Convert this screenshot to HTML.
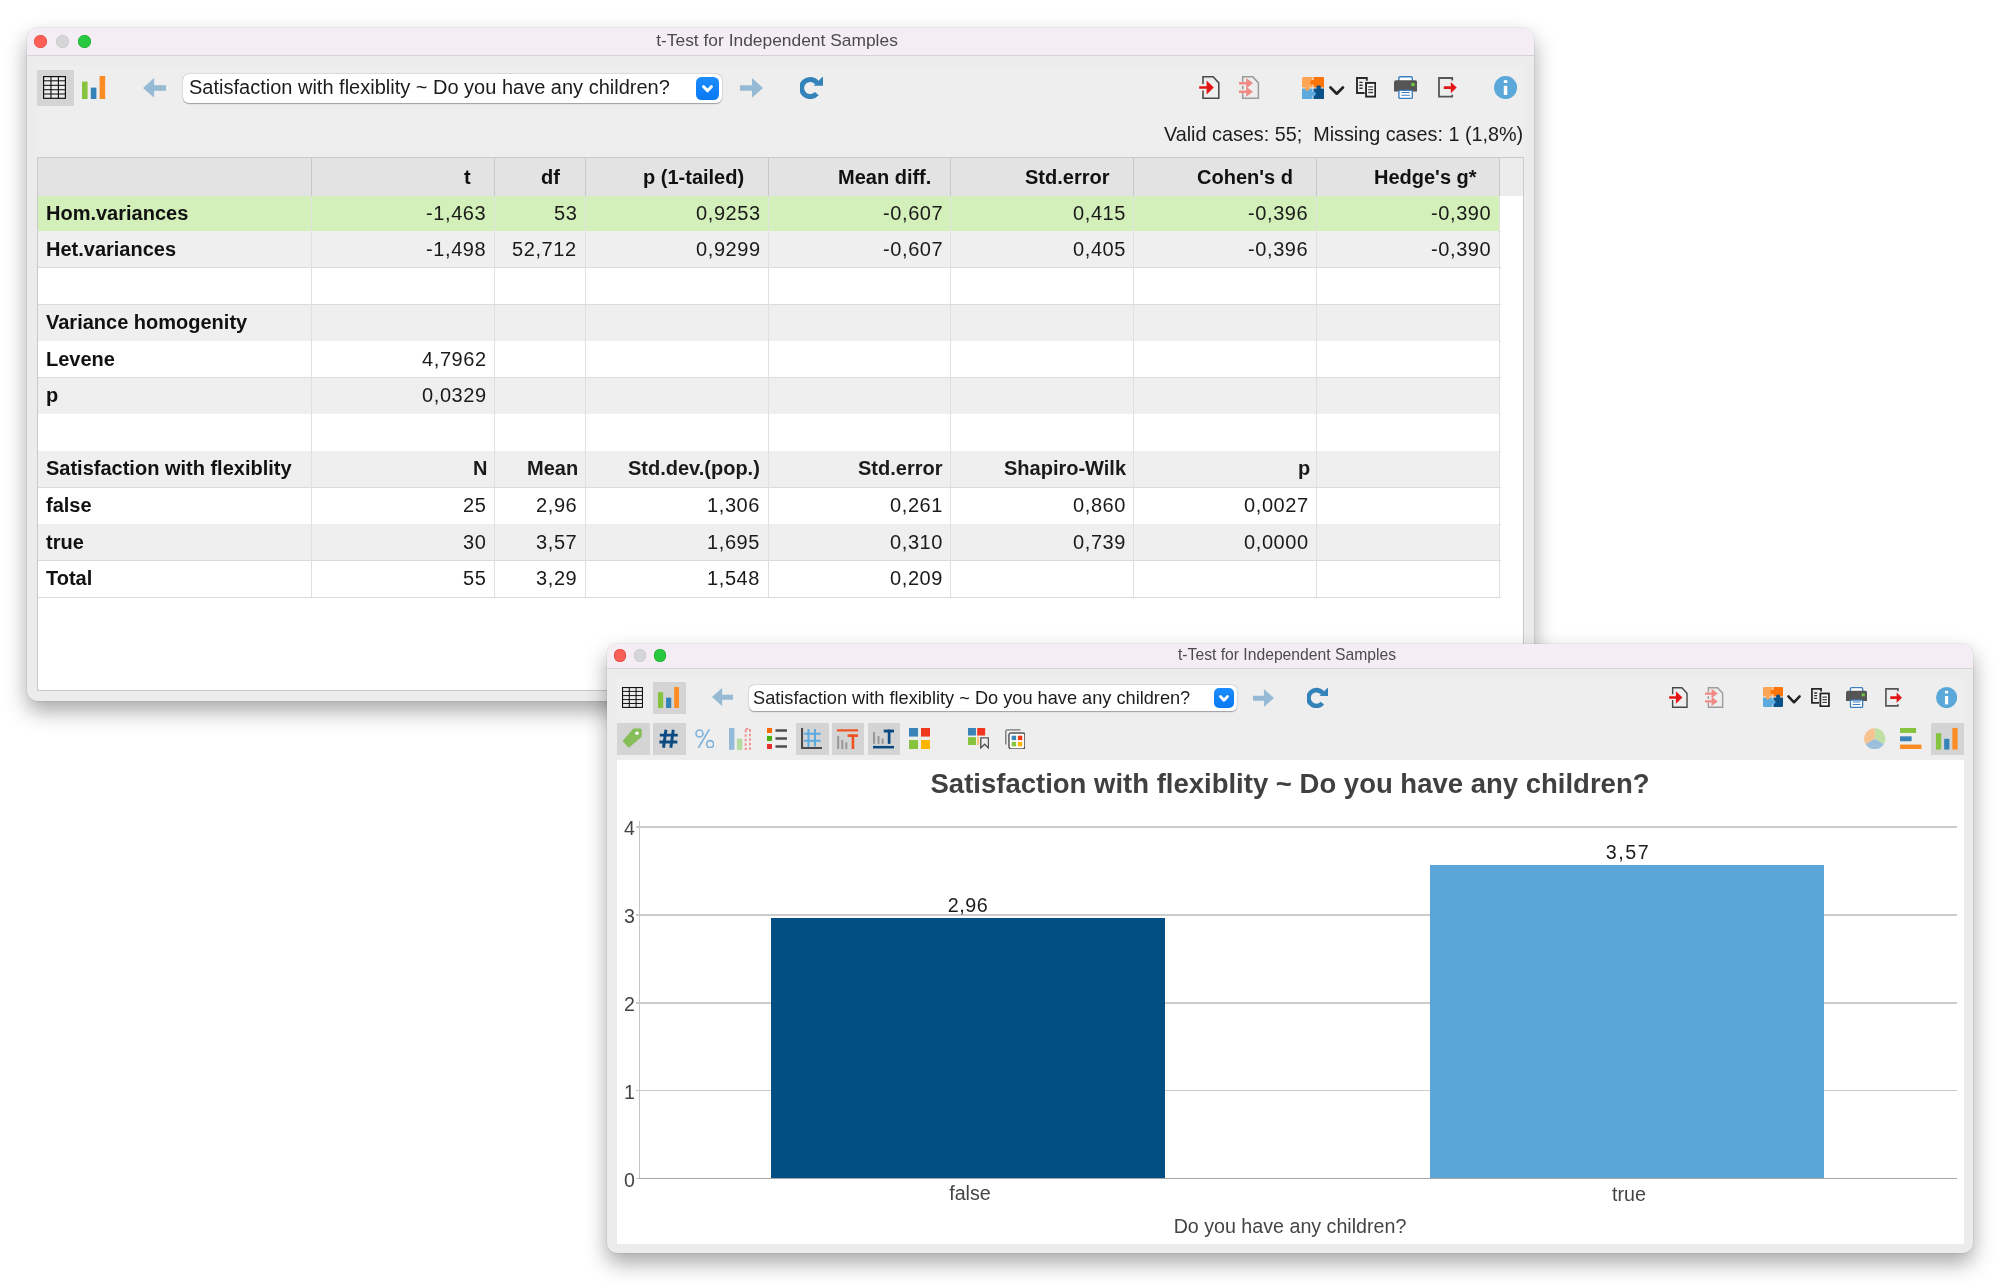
<!DOCTYPE html><html><head><meta charset="utf-8"><style>
html,body{margin:0;padding:0;background:#fff;width:2000px;height:1286px;overflow:hidden;position:relative}
.a{position:absolute;display:block}
.t{position:absolute;white-space:pre;font-family:"Liberation Sans",sans-serif;will-change:transform}
.win{position:absolute;overflow:hidden;background:#ececec}
</style></head><body>
<div class="a" style="left:27px;top:28px;width:1507px;height:673px;border-radius:11px;box-shadow:0 0 0 1px rgba(0,0,0,0.045),0 10px 21px rgba(0,0,0,0.35);background:#ececec"></div>
<div class="a" style="left:27.00px;top:28.00px;width:1507.00px;height:27.00px;background:#f4eef4;border-radius:11px 11px 0 0"></div>
<div class="a" style="left:27.00px;top:55.00px;width:1507.00px;height:1.00px;background:#d3d3d3;"></div>
<div class="a" style="left:34.10px;top:34.90px;width:13.00px;height:13.00px;border-radius:50%;background:#fe5f57;box-shadow:inset 0 0 0 0.6px #e0443e"></div><div class="a" style="left:55.80px;top:34.90px;width:13.00px;height:13.00px;border-radius:50%;background:#d6d6d6;box-shadow:inset 0 0 0 0.6px #c6c6c6"></div><div class="a" style="left:77.50px;top:34.90px;width:13.00px;height:13.00px;border-radius:50%;background:#28c840;box-shadow:inset 0 0 0 0.6px #1daa2c"></div>
<div class="t" style="left:-223.00px;width:2000px;text-align:center;top:31.87px;font-size:17.4px;line-height:17.4px;font-weight:400;color:#4b4b4b;">t-Test for Independent Samples</div>
<div class="a" style="left:37.00px;top:66.00px;width:1487.50px;height:625.00px;background:#eeeeee;"></div>
<div class="a" style="left:37.00px;top:70.00px;width:37.00px;height:36.00px;background:#d4d4d4;"></div>
<svg class="a" style="left:42.90px;top:76.20px" width="23.00" height="23.00" viewBox="0 0 23 23"><rect x="0.6" y="0.6" width="21.8" height="21.7" fill="#ededed" stroke="#111" stroke-width="1.2"/><line x1="0.6" y1="4.8" x2="22.4" y2="4.8" stroke="#1a1a1a" stroke-width="1.1"/><line x1="0.6" y1="9.36" x2="22.4" y2="9.36" stroke="#1a1a1a" stroke-width="1.1"/><line x1="0.6" y1="13.7" x2="22.4" y2="13.7" stroke="#1a1a1a" stroke-width="1.1"/><line x1="0.6" y1="18.0" x2="22.4" y2="18.0" stroke="#1a1a1a" stroke-width="1.1"/><line x1="7.96" y1="0.6" x2="7.96" y2="22.3" stroke="#111" stroke-width="1.15"/><line x1="15.4" y1="0.6" x2="15.4" y2="22.3" stroke="#111" stroke-width="1.15"/></svg>
<svg class="a" style="left:82.40px;top:76.00px" width="23.20" height="23.20" viewBox="0 0 23.2 23.2"><rect x="0" y="5.6" width="5.6" height="17.6" fill="#86c440"/><rect x="8.8" y="11.6" width="5.6" height="11.6" fill="#3383b8"/><rect x="17.6" y="0" width="5.6" height="23.2" fill="#fd8c24"/></svg>
<svg class="a" style="left:142.66px;top:77.50px" width="23.10" height="19.70" viewBox="0 0 23.1 19.7"><path d="M0 10 L11.1 0 V7.3 H23.1 V12.8 H11.1 V19.7 Z" fill="#96bad4"/></svg>
<div class="a" style="left:183.30px;top:73.80px;width:538.50px;height:29.40px;background:#fff;border-radius:6px;box-shadow:0 0.8px 1.2px rgba(0,0,0,0.32),0 0 0 0.5px rgba(0,0,0,0.07)"></div>
<div class="t" style="left:188.50px;top:77.07px;font-size:20px;line-height:20px;font-weight:400;color:#1c1c1c;">Satisfaction with flexiblity ~ Do you have any children?</div>
<div class="a" style="left:696.00px;top:76.80px;width:23.00px;height:23.00px;background:linear-gradient(#1b8dff,#0a78f2);border-radius:5.5px"></div>
<svg class="a" style="left:702.00px;top:85.00px" width="11.00" height="7.60" viewBox="0 0 11.00 7.60"><path d="M1.65 1.65 L5.50 5.80 L9.35 1.65" fill="none" stroke="#fff" stroke-width="3.0" stroke-linecap="round" stroke-linejoin="round"/></svg>
<svg class="a" style="left:739.70px;top:78.00px" width="23.10" height="19.70" viewBox="0 0 23.1 19.7"><path d="M23.1 10 L12 0 V7.3 H0 V12.8 H12 V19.7 Z" fill="#96bad4"/></svg>
<svg class="a" style="left:799.90px;top:76.00px" width="23.20" height="23.20" viewBox="0 0 23.2 23.2"><path d="M16.98 6.71 A8.6 8.6 0 1 0 16.79 17.53" fill="none" stroke="#3382b9" stroke-width="5.0"/><path d="M23.2 0 V9.8 H13.6 Z" fill="#3382b9"/></svg>
<svg class="a" style="left:1199.00px;top:76.00px" width="21.00" height="23.20" viewBox="0 0 21 23.2"><path d="M4 8 V0.75 H14.1 L19.8 6.9 V22.3 H4 V14.4" fill="none" stroke="#484848" stroke-width="1.55"/><path d="M0.2 10.2 H7.6 V4.6 L14.8 11.5 L7.6 18.4 V12.8 H0.2 Z" fill="#e31616"/></svg>
<svg class="a" style="left:1239.00px;top:76.00px" width="21.00" height="23.20" viewBox="0 0 21 23.2"><path d="M3.7 5.8 V0.75 H13.8 L19.4 6.9 V22.3 H3.7 V17 M3.7 13.3 V9.8" fill="none" stroke="#9c9c9c" stroke-width="1.55"/><path d="M0 6 H7.2 V2 L14 7.2 L7.2 12.4 V8.4 H0 Z M0 14.6 H7.2 V10.8 L14 15.8 L7.2 20.8 V17 H0 Z" fill="#f08a84"/></svg>
<svg class="a" style="left:1302.40px;top:76.50px" width="22.10" height="22.30" viewBox="0 0 22.1 22.3"><g><path d="M1.2 0 H10.55 V3.5 A2.4 2.4 0 0 0 10.55 7.3 V10.55 H7.3 A2.4 2.4 0 0 0 3.5 10.55 H0 V1.2 Q0 0 1.2 0 Z" fill="#fda455"/><path d="M11.55 0 H20.9 Q22.1 0 22.1 1.2 V10.55 H18.6 A2.4 2.4 0 0 0 14.8 10.55 H11.55 V7.3 A2.4 2.4 0 0 1 11.55 3.5 Z" fill="#ff7408"/><path d="M0 11.55 H3.5 A2.4 2.4 0 0 0 7.3 11.55 H10.55 V14.8 A2.4 2.4 0 0 1 10.55 18.6 V22.1 H1.2 Q0 22.1 0 20.9 Z" fill="#5aaade"/><path d="M11.55 11.55 H14.8 A2.4 2.4 0 0 1 18.6 11.55 H22.1 V20.9 Q22.1 22.1 20.9 22.1 H11.55 V18.6 A2.4 2.4 0 0 0 11.55 14.8 Z" fill="#0a5189"/></g><circle cx="10.55" cy="5.4" r="2.3" fill="#ff7408"/><circle cx="5.4" cy="11.55" r="2.3" fill="#fda455"/><circle cx="11.55" cy="16.7" r="2.3" fill="#5aaade"/><circle cx="16.7" cy="10.55" r="2.3" fill="#0a5189"/></svg>
<svg class="a" style="left:1329.20px;top:85.50px" width="15.40" height="9.40" viewBox="0 0 15.40 9.40"><path d="M1.49 1.49 L7.70 7.78 L13.91 1.49" fill="none" stroke="#222" stroke-width="2.7" stroke-linecap="round" stroke-linejoin="round"/></svg>
<svg class="a" style="left:1356.00px;top:77.00px" width="20.20" height="20.60" viewBox="0 0 20.2 20.6"><path d="M10.8 3.8 V1 H1 V16 H8.6" fill="none" stroke="#2a2a2a" stroke-width="1.9"/><path d="M3.4 5.4 H6.6 M3.4 8.3 H6.6 M3.4 11.2 H6.6" stroke="#333" stroke-width="1.4"/><rect x="10.1" y="5.9" width="9.2" height="13.7" fill="#fff" stroke="#222" stroke-width="1.9"/><path d="M12.2 9.9 H17.2 M12.2 12.6 H17.2 M12.2 15.5 H17.2" stroke="#444" stroke-width="1.4"/></svg>
<svg class="a" style="left:1394.00px;top:76.00px" width="23.20" height="23.20" viewBox="0 0 23.2 23.2"><rect x="4.9" y="0.7" width="13.4" height="9" rx="1.2" fill="#fff" stroke="#3d7fc0" stroke-width="1.4"/><path d="M2 4.2 H21.2 Q23.2 4.2 23.2 6.2 V15.4 H0 V6.2 Q0 4.2 2 4.2 Z" fill="#555"/><rect x="17.2" y="7" width="3.5" height="3.2" fill="#6fc53a"/><rect x="4.9" y="14.4" width="13.4" height="8.1" rx="1.2" fill="#fff" stroke="#3d7fc0" stroke-width="1.4"/><path d="M7.4 16.5 H15.8 M7.4 19.3 H15.8" stroke="#3d7fc0" stroke-width="1.1"/></svg>
<svg class="a" style="left:1438.00px;top:77.00px" width="19.00" height="21.00" viewBox="0 0 19 21"><path d="M14.2 3.5 V1 H1 V19.7 H14.2 V17.8" fill="none" stroke="#555" stroke-width="1.8"/><path d="M5.8 9.2 H12.8 V5 L18.7 10.6 L12.8 16.2 V12 H5.8 Z" fill="#e31616"/></svg>
<svg class="a" style="left:1493.80px;top:76.00px" width="23.10" height="23.10" viewBox="0 0 23.1 23.1"><circle cx="11.55" cy="11.55" r="11.55" fill="#5aa7da"/><rect x="9.8" y="4.2" width="3.5" height="2.8" fill="#fff"/><rect x="9.8" y="9.8" width="3.5" height="9.2" fill="#fff"/></svg>
<div class="t" style="right:477.30px;text-align:right;top:125.24px;font-size:19.8px;line-height:19.8px;font-weight:400;color:#1c1c1c;">Valid cases: 55;  Missing cases: 1 (1,8%)</div>
<div class="a" style="left:37.00px;top:157.00px;width:1487.20px;height:534.00px;background:#fff;box-shadow:inset 0 0 0 1px #c9c9c9"></div>
<div class="a" style="left:38.00px;top:158.00px;width:1462.00px;height:38.00px;background:#e3e3e3;"></div>
<div class="a" style="left:1500.00px;top:158.00px;width:23.20px;height:38.00px;background:#ececec;"></div>
<div class="a" style="left:38.00px;top:196.00px;width:1462.00px;height:35.30px;background:#d3efba;"></div>
<div class="a" style="left:38.00px;top:230.80px;width:1462.50px;height:1.20px;background:#dadada;"></div>
<div class="a" style="left:38.00px;top:231.30px;width:1462.00px;height:36.60px;background:#efefef;"></div>
<div class="a" style="left:38.00px;top:267.40px;width:1462.50px;height:1.20px;background:#dadada;"></div>
<div class="a" style="left:38.00px;top:267.90px;width:1462.00px;height:36.60px;background:#fff;"></div>
<div class="a" style="left:38.00px;top:304.00px;width:1462.50px;height:1.20px;background:#dadada;"></div>
<div class="a" style="left:38.00px;top:304.50px;width:1462.00px;height:36.60px;background:#efefef;"></div>
<div class="a" style="left:38.00px;top:340.60px;width:1462.50px;height:1.20px;background:#dadada;"></div>
<div class="a" style="left:38.00px;top:341.10px;width:1462.00px;height:36.60px;background:#fff;"></div>
<div class="a" style="left:38.00px;top:377.20px;width:1462.50px;height:1.20px;background:#dadada;"></div>
<div class="a" style="left:38.00px;top:377.70px;width:1462.00px;height:36.70px;background:#efefef;"></div>
<div class="a" style="left:38.00px;top:413.90px;width:1462.50px;height:1.20px;background:#dadada;"></div>
<div class="a" style="left:38.00px;top:414.40px;width:1462.00px;height:36.60px;background:#fff;"></div>
<div class="a" style="left:38.00px;top:450.50px;width:1462.50px;height:1.20px;background:#dadada;"></div>
<div class="a" style="left:38.00px;top:451.00px;width:1462.00px;height:36.60px;background:#efefef;"></div>
<div class="a" style="left:38.00px;top:487.10px;width:1462.50px;height:1.20px;background:#dadada;"></div>
<div class="a" style="left:38.00px;top:487.60px;width:1462.00px;height:36.60px;background:#fff;"></div>
<div class="a" style="left:38.00px;top:523.70px;width:1462.50px;height:1.20px;background:#dadada;"></div>
<div class="a" style="left:38.00px;top:524.20px;width:1462.00px;height:36.60px;background:#efefef;"></div>
<div class="a" style="left:38.00px;top:560.30px;width:1462.50px;height:1.20px;background:#dadada;"></div>
<div class="a" style="left:38.00px;top:560.80px;width:1462.00px;height:36.60px;background:#fff;"></div>
<div class="a" style="left:38.00px;top:596.90px;width:1462.50px;height:1.20px;background:#dadada;"></div>
<div class="a" style="left:310.60px;top:158.00px;width:1.20px;height:38.00px;background:#c8c8c8;"></div>
<div class="a" style="left:310.60px;top:196.00px;width:1.20px;height:401.40px;background:#e0e0e0;"></div>
<div class="a" style="left:493.80px;top:158.00px;width:1.20px;height:38.00px;background:#c8c8c8;"></div>
<div class="a" style="left:493.80px;top:196.00px;width:1.20px;height:401.40px;background:#e0e0e0;"></div>
<div class="a" style="left:584.50px;top:158.00px;width:1.20px;height:38.00px;background:#c8c8c8;"></div>
<div class="a" style="left:584.50px;top:196.00px;width:1.20px;height:401.40px;background:#e0e0e0;"></div>
<div class="a" style="left:767.70px;top:158.00px;width:1.20px;height:38.00px;background:#c8c8c8;"></div>
<div class="a" style="left:767.70px;top:196.00px;width:1.20px;height:401.40px;background:#e0e0e0;"></div>
<div class="a" style="left:950.20px;top:158.00px;width:1.20px;height:38.00px;background:#c8c8c8;"></div>
<div class="a" style="left:950.20px;top:196.00px;width:1.20px;height:401.40px;background:#e0e0e0;"></div>
<div class="a" style="left:1132.90px;top:158.00px;width:1.20px;height:38.00px;background:#c8c8c8;"></div>
<div class="a" style="left:1132.90px;top:196.00px;width:1.20px;height:401.40px;background:#e0e0e0;"></div>
<div class="a" style="left:1315.80px;top:158.00px;width:1.20px;height:38.00px;background:#c8c8c8;"></div>
<div class="a" style="left:1315.80px;top:196.00px;width:1.20px;height:401.40px;background:#e0e0e0;"></div>
<div class="a" style="left:1498.80px;top:158.00px;width:1.20px;height:38.00px;background:#c8c8c8;"></div>
<div class="a" style="left:1498.80px;top:196.00px;width:1.20px;height:401.40px;background:#e0e0e0;"></div>
<div class="t" style="right:1529.60px;text-align:right;top:167.07px;font-size:20px;line-height:20px;font-weight:700;color:#111;">t</div>
<div class="t" style="right:1439.90px;text-align:right;top:167.07px;font-size:20px;line-height:20px;font-weight:700;color:#111;">df</div>
<div class="t" style="right:1256.20px;text-align:right;top:167.07px;font-size:20px;line-height:20px;font-weight:700;color:#111;">p (1-tailed)</div>
<div class="t" style="right:1068.90px;text-align:right;top:167.07px;font-size:20px;line-height:20px;font-weight:700;color:#111;">Mean diff.</div>
<div class="t" style="right:890.25px;text-align:right;top:167.07px;font-size:20px;line-height:20px;font-weight:700;color:#111;">Std.error</div>
<div class="t" style="right:707.10px;text-align:right;top:167.07px;font-size:20px;line-height:20px;font-weight:700;color:#111;">Cohen's d</div>
<div class="t" style="right:523.85px;text-align:right;top:167.07px;font-size:20px;line-height:20px;font-weight:700;color:#111;">Hedge's g*</div>
<div class="t" style="left:46.00px;top:203.47px;font-size:20px;line-height:20px;font-weight:700;color:#111;">Hom.variances</div>
<div class="t" style="right:1513.50px;text-align:right;top:203.47px;font-size:20px;line-height:20px;font-weight:400;color:#1a1a1a;letter-spacing:0.6px">-1,463</div>
<div class="t" style="right:1422.80px;text-align:right;top:203.47px;font-size:20px;line-height:20px;font-weight:400;color:#1a1a1a;letter-spacing:0.6px">53</div>
<div class="t" style="right:1239.60px;text-align:right;top:203.47px;font-size:20px;line-height:20px;font-weight:400;color:#1a1a1a;letter-spacing:0.6px">0,9253</div>
<div class="t" style="right:1057.10px;text-align:right;top:203.47px;font-size:20px;line-height:20px;font-weight:400;color:#1a1a1a;letter-spacing:0.6px">-0,607</div>
<div class="t" style="right:874.40px;text-align:right;top:203.47px;font-size:20px;line-height:20px;font-weight:400;color:#1a1a1a;letter-spacing:0.6px">0,415</div>
<div class="t" style="right:691.50px;text-align:right;top:203.47px;font-size:20px;line-height:20px;font-weight:400;color:#1a1a1a;letter-spacing:0.6px">-0,396</div>
<div class="t" style="right:508.50px;text-align:right;top:203.47px;font-size:20px;line-height:20px;font-weight:400;color:#1a1a1a;letter-spacing:0.6px">-0,390</div>
<div class="t" style="left:46.00px;top:238.77px;font-size:20px;line-height:20px;font-weight:700;color:#111;">Het.variances</div>
<div class="t" style="right:1513.50px;text-align:right;top:238.77px;font-size:20px;line-height:20px;font-weight:400;color:#1a1a1a;letter-spacing:0.6px">-1,498</div>
<div class="t" style="right:1422.80px;text-align:right;top:238.77px;font-size:20px;line-height:20px;font-weight:400;color:#1a1a1a;letter-spacing:0.6px">52,712</div>
<div class="t" style="right:1239.60px;text-align:right;top:238.77px;font-size:20px;line-height:20px;font-weight:400;color:#1a1a1a;letter-spacing:0.6px">0,9299</div>
<div class="t" style="right:1057.10px;text-align:right;top:238.77px;font-size:20px;line-height:20px;font-weight:400;color:#1a1a1a;letter-spacing:0.6px">-0,607</div>
<div class="t" style="right:874.40px;text-align:right;top:238.77px;font-size:20px;line-height:20px;font-weight:400;color:#1a1a1a;letter-spacing:0.6px">0,405</div>
<div class="t" style="right:691.50px;text-align:right;top:238.77px;font-size:20px;line-height:20px;font-weight:400;color:#1a1a1a;letter-spacing:0.6px">-0,396</div>
<div class="t" style="right:508.50px;text-align:right;top:238.77px;font-size:20px;line-height:20px;font-weight:400;color:#1a1a1a;letter-spacing:0.6px">-0,390</div>
<div class="t" style="left:46.00px;top:275.37px;font-size:20px;line-height:20px;font-weight:700;color:#111;"></div>
<div class="t" style="left:46.00px;top:311.97px;font-size:20px;line-height:20px;font-weight:700;color:#111;">Variance homogenity</div>
<div class="t" style="left:46.00px;top:348.57px;font-size:20px;line-height:20px;font-weight:700;color:#111;">Levene</div>
<div class="t" style="right:1513.50px;text-align:right;top:348.57px;font-size:20px;line-height:20px;font-weight:400;color:#1a1a1a;letter-spacing:0.6px">4,7962</div>
<div class="t" style="left:46.00px;top:385.17px;font-size:20px;line-height:20px;font-weight:700;color:#111;">p</div>
<div class="t" style="right:1513.50px;text-align:right;top:385.17px;font-size:20px;line-height:20px;font-weight:400;color:#1a1a1a;letter-spacing:0.6px">0,0329</div>
<div class="t" style="left:46.00px;top:421.87px;font-size:20px;line-height:20px;font-weight:700;color:#111;"></div>
<div class="t" style="left:46.00px;top:458.47px;font-size:20px;line-height:20px;font-weight:700;color:#111;">Satisfaction with flexiblity</div>
<div class="t" style="right:1512.60px;text-align:right;top:458.47px;font-size:20px;line-height:20px;font-weight:700;color:#1a1a1a;">N</div>
<div class="t" style="right:1421.90px;text-align:right;top:458.47px;font-size:20px;line-height:20px;font-weight:700;color:#1a1a1a;">Mean</div>
<div class="t" style="right:1240.20px;text-align:right;top:458.47px;font-size:20px;line-height:20px;font-weight:700;color:#1a1a1a;">Std.dev.(pop.)</div>
<div class="t" style="right:1057.70px;text-align:right;top:458.47px;font-size:20px;line-height:20px;font-weight:700;color:#1a1a1a;">Std.error</div>
<div class="t" style="right:873.50px;text-align:right;top:458.47px;font-size:20px;line-height:20px;font-weight:700;color:#1a1a1a;">Shapiro-Wilk</div>
<div class="t" style="right:689.60px;text-align:right;top:458.47px;font-size:20px;line-height:20px;font-weight:700;color:#1a1a1a;">p</div>
<div class="t" style="left:46.00px;top:495.07px;font-size:20px;line-height:20px;font-weight:700;color:#111;">false</div>
<div class="t" style="right:1513.50px;text-align:right;top:495.07px;font-size:20px;line-height:20px;font-weight:400;color:#1a1a1a;letter-spacing:0.6px">25</div>
<div class="t" style="right:1422.80px;text-align:right;top:495.07px;font-size:20px;line-height:20px;font-weight:400;color:#1a1a1a;letter-spacing:0.6px">2,96</div>
<div class="t" style="right:1239.60px;text-align:right;top:495.07px;font-size:20px;line-height:20px;font-weight:400;color:#1a1a1a;letter-spacing:0.6px">1,306</div>
<div class="t" style="right:1057.10px;text-align:right;top:495.07px;font-size:20px;line-height:20px;font-weight:400;color:#1a1a1a;letter-spacing:0.6px">0,261</div>
<div class="t" style="right:874.40px;text-align:right;top:495.07px;font-size:20px;line-height:20px;font-weight:400;color:#1a1a1a;letter-spacing:0.6px">0,860</div>
<div class="t" style="right:691.50px;text-align:right;top:495.07px;font-size:20px;line-height:20px;font-weight:400;color:#1a1a1a;letter-spacing:0.6px">0,0027</div>
<div class="t" style="left:46.00px;top:531.67px;font-size:20px;line-height:20px;font-weight:700;color:#111;">true</div>
<div class="t" style="right:1513.50px;text-align:right;top:531.67px;font-size:20px;line-height:20px;font-weight:400;color:#1a1a1a;letter-spacing:0.6px">30</div>
<div class="t" style="right:1422.80px;text-align:right;top:531.67px;font-size:20px;line-height:20px;font-weight:400;color:#1a1a1a;letter-spacing:0.6px">3,57</div>
<div class="t" style="right:1239.60px;text-align:right;top:531.67px;font-size:20px;line-height:20px;font-weight:400;color:#1a1a1a;letter-spacing:0.6px">1,695</div>
<div class="t" style="right:1057.10px;text-align:right;top:531.67px;font-size:20px;line-height:20px;font-weight:400;color:#1a1a1a;letter-spacing:0.6px">0,310</div>
<div class="t" style="right:874.40px;text-align:right;top:531.67px;font-size:20px;line-height:20px;font-weight:400;color:#1a1a1a;letter-spacing:0.6px">0,739</div>
<div class="t" style="right:691.50px;text-align:right;top:531.67px;font-size:20px;line-height:20px;font-weight:400;color:#1a1a1a;letter-spacing:0.6px">0,0000</div>
<div class="t" style="left:46.00px;top:568.27px;font-size:20px;line-height:20px;font-weight:700;color:#111;">Total</div>
<div class="t" style="right:1513.50px;text-align:right;top:568.27px;font-size:20px;line-height:20px;font-weight:400;color:#1a1a1a;letter-spacing:0.6px">55</div>
<div class="t" style="right:1422.80px;text-align:right;top:568.27px;font-size:20px;line-height:20px;font-weight:400;color:#1a1a1a;letter-spacing:0.6px">3,29</div>
<div class="t" style="right:1239.60px;text-align:right;top:568.27px;font-size:20px;line-height:20px;font-weight:400;color:#1a1a1a;letter-spacing:0.6px">1,548</div>
<div class="t" style="right:1057.10px;text-align:right;top:568.27px;font-size:20px;line-height:20px;font-weight:400;color:#1a1a1a;letter-spacing:0.6px">0,209</div>
<div class="a" style="left:607px;top:644px;width:1366px;height:608.5px;border-radius:10px;box-shadow:0 0 0 1px rgba(0,0,0,0.045),0 10px 21px rgba(0,0,0,0.35);background:#ececec"></div>
<div class="a" style="left:607.00px;top:644.00px;width:1366.00px;height:24.00px;background:#f4eef4;border-radius:10px 10px 0 0"></div>
<div class="a" style="left:607.00px;top:668.00px;width:1366.00px;height:1.00px;background:#d3d3d3;"></div>
<div class="a" style="left:613.55px;top:649.45px;width:12.30px;height:12.30px;border-radius:50%;background:#fe5f57;box-shadow:inset 0 0 0 0.6px #e0443e"></div><div class="a" style="left:633.55px;top:649.45px;width:12.30px;height:12.30px;border-radius:50%;background:#d6d6d6;box-shadow:inset 0 0 0 0.6px #c6c6c6"></div><div class="a" style="left:653.55px;top:649.45px;width:12.30px;height:12.30px;border-radius:50%;background:#28c840;box-shadow:inset 0 0 0 0.6px #1daa2c"></div>
<div class="t" style="left:287.00px;width:2000px;text-align:center;top:646.91px;font-size:15.7px;line-height:15.7px;font-weight:400;color:#4b4b4b;">t-Test for Independent Samples</div>
<div class="a" style="left:617.00px;top:677.00px;width:1347.00px;height:83.00px;background:#eeeeee;"></div>
<svg class="a" style="left:622.00px;top:686.80px" width="21.05" height="21.05" viewBox="0 0 23 23"><rect x="0.6" y="0.6" width="21.8" height="21.7" fill="#ededed" stroke="#111" stroke-width="1.2"/><line x1="0.6" y1="4.8" x2="22.4" y2="4.8" stroke="#1a1a1a" stroke-width="1.1"/><line x1="0.6" y1="9.36" x2="22.4" y2="9.36" stroke="#1a1a1a" stroke-width="1.1"/><line x1="0.6" y1="13.7" x2="22.4" y2="13.7" stroke="#1a1a1a" stroke-width="1.1"/><line x1="0.6" y1="18.0" x2="22.4" y2="18.0" stroke="#1a1a1a" stroke-width="1.1"/><line x1="7.96" y1="0.6" x2="7.96" y2="22.3" stroke="#111" stroke-width="1.15"/><line x1="15.4" y1="0.6" x2="15.4" y2="22.3" stroke="#111" stroke-width="1.15"/></svg>
<div class="a" style="left:652.60px;top:681.60px;width:33.00px;height:32.60px;background:#d4d4d4;"></div>
<svg class="a" style="left:657.80px;top:686.80px" width="21.34" height="21.34" viewBox="0 0 23.2 23.2"><rect x="0" y="5.6" width="5.6" height="17.6" fill="#86c440"/><rect x="8.8" y="11.6" width="5.6" height="11.6" fill="#3383b8"/><rect x="17.6" y="0" width="5.6" height="23.2" fill="#fd8c24"/></svg>
<svg class="a" style="left:712.40px;top:688.40px" width="21.02" height="17.93" viewBox="0 0 23.1 19.7"><path d="M0 10 L11.1 0 V7.3 H23.1 V12.8 H11.1 V19.7 Z" fill="#96bad4"/></svg>
<div class="a" style="left:749.20px;top:684.80px;width:487.80px;height:26.40px;background:#fff;border-radius:5.5px;box-shadow:0 0.8px 1.2px rgba(0,0,0,0.32),0 0 0 0.5px rgba(0,0,0,0.07)"></div>
<div class="t" style="left:753.20px;top:688.69px;font-size:18.2px;line-height:18.2px;font-weight:400;color:#1c1c1c;">Satisfaction with flexiblity ~ Do you have any children?</div>
<div class="a" style="left:1213.60px;top:687.60px;width:20.40px;height:20.40px;background:linear-gradient(#1b8dff,#0a78f2);border-radius:5px"></div>
<svg class="a" style="left:1219.00px;top:695.20px" width="10.00" height="6.90" viewBox="0 0 10.00 6.90"><path d="M1.49 1.49 L5.00 5.28 L8.52 1.49" fill="none" stroke="#fff" stroke-width="2.7" stroke-linecap="round" stroke-linejoin="round"/></svg>
<svg class="a" style="left:1253.00px;top:689.00px" width="21.02" height="17.93" viewBox="0 0 23.1 19.7"><path d="M23.1 10 L12 0 V7.3 H0 V12.8 H12 V19.7 Z" fill="#96bad4"/></svg>
<svg class="a" style="left:1307.00px;top:687.00px" width="21.34" height="21.34" viewBox="0 0 23.2 23.2"><path d="M16.98 6.71 A8.6 8.6 0 1 0 16.79 17.53" fill="none" stroke="#3382b9" stroke-width="5.0"/><path d="M23.2 0 V9.8 H13.6 Z" fill="#3382b9"/></svg>
<svg class="a" style="left:1669.40px;top:687.00px" width="19.11" height="21.11" viewBox="0 0 21 23.2"><path d="M4 8 V0.75 H14.1 L19.8 6.9 V22.3 H4 V14.4" fill="none" stroke="#484848" stroke-width="1.55"/><path d="M0.2 10.2 H7.6 V4.6 L14.8 11.5 L7.6 18.4 V12.8 H0.2 Z" fill="#e31616"/></svg>
<svg class="a" style="left:1705.20px;top:687.00px" width="19.11" height="21.11" viewBox="0 0 21 23.2"><path d="M3.7 5.8 V0.75 H13.8 L19.4 6.9 V22.3 H3.7 V17 M3.7 13.3 V9.8" fill="none" stroke="#9c9c9c" stroke-width="1.55"/><path d="M0 6 H7.2 V2 L14 7.2 L7.2 12.4 V8.4 H0 Z M0 14.6 H7.2 V10.8 L14 15.8 L7.2 20.8 V17 H0 Z" fill="#f08a84"/></svg>
<svg class="a" style="left:1762.80px;top:687.40px" width="20.00" height="20.18" viewBox="0 0 22.1 22.3"><g><path d="M1.2 0 H10.55 V3.5 A2.4 2.4 0 0 0 10.55 7.3 V10.55 H7.3 A2.4 2.4 0 0 0 3.5 10.55 H0 V1.2 Q0 0 1.2 0 Z" fill="#fda455"/><path d="M11.55 0 H20.9 Q22.1 0 22.1 1.2 V10.55 H18.6 A2.4 2.4 0 0 0 14.8 10.55 H11.55 V7.3 A2.4 2.4 0 0 1 11.55 3.5 Z" fill="#ff7408"/><path d="M0 11.55 H3.5 A2.4 2.4 0 0 0 7.3 11.55 H10.55 V14.8 A2.4 2.4 0 0 1 10.55 18.6 V22.1 H1.2 Q0 22.1 0 20.9 Z" fill="#5aaade"/><path d="M11.55 11.55 H14.8 A2.4 2.4 0 0 1 18.6 11.55 H22.1 V20.9 Q22.1 22.1 20.9 22.1 H11.55 V18.6 A2.4 2.4 0 0 0 11.55 14.8 Z" fill="#0a5189"/></g><circle cx="10.55" cy="5.4" r="2.3" fill="#ff7408"/><circle cx="5.4" cy="11.55" r="2.3" fill="#fda455"/><circle cx="11.55" cy="16.7" r="2.3" fill="#5aaade"/><circle cx="16.7" cy="10.55" r="2.3" fill="#0a5189"/></svg>
<svg class="a" style="left:1787.20px;top:695.40px" width="14.00" height="8.80" viewBox="0 0 14.00 8.80"><path d="M1.38 1.38 L7.00 7.30 L12.62 1.38" fill="none" stroke="#222" stroke-width="2.5" stroke-linecap="round" stroke-linejoin="round"/></svg>
<svg class="a" style="left:1811.20px;top:688.00px" width="18.79" height="19.16" viewBox="0 0 20.2 20.6"><path d="M10.8 3.8 V1 H1 V16 H8.6" fill="none" stroke="#2a2a2a" stroke-width="1.9"/><path d="M3.4 5.4 H6.6 M3.4 8.3 H6.6 M3.4 11.2 H6.6" stroke="#333" stroke-width="1.4"/><rect x="10.1" y="5.9" width="9.2" height="13.7" fill="#fff" stroke="#222" stroke-width="1.9"/><path d="M12.2 9.9 H17.2 M12.2 12.6 H17.2 M12.2 15.5 H17.2" stroke="#444" stroke-width="1.4"/></svg>
<svg class="a" style="left:1845.90px;top:686.70px" width="21.11" height="21.11" viewBox="0 0 23.2 23.2"><rect x="4.9" y="0.7" width="13.4" height="9" rx="1.2" fill="#fff" stroke="#3d7fc0" stroke-width="1.4"/><path d="M2 4.2 H21.2 Q23.2 4.2 23.2 6.2 V15.4 H0 V6.2 Q0 4.2 2 4.2 Z" fill="#555"/><rect x="17.2" y="7" width="3.5" height="3.2" fill="#6fc53a"/><rect x="4.9" y="14.4" width="13.4" height="8.1" rx="1.2" fill="#fff" stroke="#3d7fc0" stroke-width="1.4"/><path d="M7.4 16.5 H15.8 M7.4 19.3 H15.8" stroke="#3d7fc0" stroke-width="1.1"/></svg>
<svg class="a" style="left:1884.50px;top:688.00px" width="17.29" height="19.11" viewBox="0 0 19 21"><path d="M14.2 3.5 V1 H1 V19.7 H14.2 V17.8" fill="none" stroke="#555" stroke-width="1.8"/><path d="M5.8 9.2 H12.8 V5 L18.7 10.6 L12.8 16.2 V12 H5.8 Z" fill="#e31616"/></svg>
<svg class="a" style="left:1935.90px;top:686.70px" width="21.14" height="21.14" viewBox="0 0 23.1 23.1"><circle cx="11.55" cy="11.55" r="11.55" fill="#5aa7da"/><rect x="9.8" y="4.2" width="3.5" height="2.8" fill="#fff"/><rect x="9.8" y="9.8" width="3.5" height="9.2" fill="#fff"/></svg>
<div class="a" style="left:617.00px;top:722.70px;width:32.80px;height:32.80px;background:#d4d4d4;"></div>
<div class="a" style="left:652.60px;top:722.70px;width:33.00px;height:32.80px;background:#d4d4d4;"></div>
<div class="a" style="left:796.00px;top:722.70px;width:32.80px;height:32.80px;background:#d4d4d4;"></div>
<div class="a" style="left:831.80px;top:722.70px;width:32.70px;height:32.80px;background:#d4d4d4;"></div>
<div class="a" style="left:867.50px;top:722.70px;width:32.50px;height:32.80px;background:#d4d4d4;"></div>
<div class="a" style="left:1931.00px;top:722.70px;width:32.80px;height:32.80px;background:#d4d4d4;"></div>
<div class="a" style="left:617.00px;top:759.60px;width:1347.00px;height:484.40px;background:#fff;"></div>
<svg class="a" style="left:622.30px;top:728.20px;" width="20.20" height="20.20" viewBox="0 0 24 24"><path d="M13.5 0.5 H21.5 Q23.5 0.5 23.5 2.5 V10.5 L8 23.5 L0.5 15.5 Z" fill="#86be5a" transform="rotate(0)"/><circle cx="17.8" cy="6.2" r="2.1" fill="#fff"/></svg>
<svg class="a" style="left:658.60px;top:729.00px;" width="19.60" height="19.60" viewBox="0 0 24 24"><path d="M8.5 1 L5.5 23 M17.5 1 L14.5 23 M1 7.5 H23 M0.5 16 H22.5" stroke="#0c4b82" stroke-width="3.6" fill="none"/></svg>
<svg class="a" style="left:694.60px;top:728.60px;" width="19.60" height="19.60" viewBox="0 0 24 24"><circle cx="5.5" cy="5.5" r="4.3" fill="none" stroke="#7fb1d8" stroke-width="2"/><circle cx="18.5" cy="18.5" r="4.3" fill="none" stroke="#7fb1d8" stroke-width="2"/><path d="M17.5 0.5 L4 23.5" stroke="#7fb1d8" stroke-width="2"/></svg>
<svg class="a" style="left:729.20px;top:728.00px;" width="21.80" height="21.80" viewBox="0 0 24 24"><rect x="0" y="0" width="6" height="24" fill="#94b9d9"/><rect x="8.7" y="11.8" width="6" height="12.2" fill="#b6dca2"/><rect x="18.3" y="1" width="4.8" height="22" fill="none" stroke="#ef8a8a" stroke-width="2" stroke-dasharray="2.8 2.2"/></svg>
<svg class="a" style="left:766.50px;top:728.00px;" width="21.00" height="21.00" viewBox="0 0 24 24"><rect x="0" y="0" width="5.7" height="5.7" fill="#fb6a00"/><rect x="0" y="9.1" width="5.7" height="5.7" fill="#45ae10"/><rect x="0" y="18.3" width="5.7" height="5.7" fill="#e8302a"/><path d="M9.7 2.9 H22.8 M9.7 12 H22.8 M9.7 21.1 H22.8" stroke="#4d4d4d" stroke-width="2.9"/></svg>
<svg class="a" style="left:801.00px;top:728.00px;" width="21.00" height="21.00" viewBox="0 0 24 24"><path d="M8.5 1 V23 M16 1 V21 M3.5 6.5 H22.5 M3.5 14.5 H22.5" stroke="#5aaae0" stroke-width="2.3"/><path d="M1.2 0 V22.8 H24" fill="none" stroke="#4a4a4a" stroke-width="2.4"/></svg>
<svg class="a" style="left:836.80px;top:728.00px;" width="21.20" height="21.20" viewBox="0 0 24 24"><rect x="0" y="1.5" width="24" height="2.4" fill="#f0501e"/><rect x="0.2" y="9" width="2.3" height="15" fill="#999"/><rect x="4.8" y="13.5" width="2.3" height="10.5" fill="#999"/><rect x="9.4" y="16.3" width="2.3" height="7.7" fill="#999"/><rect x="12" y="7.2" width="12" height="2.9" fill="#f0501e"/><rect x="16.6" y="7.2" width="2.9" height="16.8" fill="#f0501e"/></svg>
<svg class="a" style="left:872.50px;top:728.00px;" width="21.50" height="21.50" viewBox="0 0 24 24"><rect x="0" y="4.4" width="2.3" height="13.3" fill="#999"/><rect x="5" y="9" width="2.3" height="8.7" fill="#999"/><rect x="9.6" y="11.8" width="2.3" height="5.9" fill="#999"/><rect x="12" y="1.8" width="12" height="3.2" fill="#0b4a80"/><rect x="16.5" y="1.8" width="3" height="15.9" fill="#0b4a80"/><rect x="0" y="20" width="24" height="2.8" fill="#0b4a80"/></svg>
<svg class="a" style="left:908.50px;top:728.00px;" width="21.00" height="21.00" viewBox="0 0 24 24"><rect x="0" y="0" width="10.3" height="9.8" fill="#3a84b8"/><rect x="13.7" y="0" width="10.3" height="9.8" fill="#f0361d"/><rect x="0" y="13.7" width="10.3" height="10.3" fill="#86c440"/><rect x="13.7" y="13.7" width="10.3" height="10.3" fill="#ffb400"/></svg>
<svg class="a" style="left:968.00px;top:728.00px;" width="21.00" height="21.00" viewBox="0 0 24 24"><rect x="0" y="0" width="9.1" height="8.6" fill="#3a84b8"/><rect x="10.5" y="0" width="9.1" height="8.6" fill="#f0361d"/><rect x="0" y="10.5" width="9.1" height="8.9" fill="#86c440"/><rect x="10.5" y="10.5" width="2" height="8.9" fill="#ffc060"/><path d="M14.6 11.3 H23.4 V22.8 L19 18.6 L14.6 22.8 Z" fill="#eee" stroke="#555" stroke-width="1.6"/></svg>
<svg class="a" style="left:1004.50px;top:728.50px;" width="20.60" height="20.60" viewBox="0 0 24 24"><path d="M0.9 18 V3 Q0.9 1 2.9 1 H18" fill="none" stroke="#777" stroke-width="1.6"/><rect x="4.6" y="4.6" width="18.6" height="18.6" rx="2.5" fill="#fff" stroke="#555" stroke-width="1.7"/><rect x="7.8" y="7.8" width="5.2" height="5.2" fill="#3a84b8"/><rect x="15" y="7.8" width="5.2" height="5.2" fill="#f0361d"/><rect x="7.8" y="15" width="5.2" height="5.2" fill="#86c440"/><rect x="15" y="15" width="5.2" height="5.2" fill="#ffb400"/></svg>
<svg class="a" style="left:1864.40px;top:727.60px;" width="21.40" height="21.40" viewBox="0 0 24 24"><path d="M12 12 L12.00 0.20 A11.8 11.8 0 0 1 22.22 17.90 Z" fill="#bfe0a2"/><path d="M12 12 L22.22 17.90 A11.8 11.8 0 0 1 1.78 17.90 Z" fill="#9cc0dc"/><path d="M12 12 L1.78 17.90 A11.8 11.8 0 0 1 12.00 0.20 Z" fill="#f8c190"/></svg>
<svg class="a" style="left:1900.00px;top:727.70px;" width="21.50" height="21.50" viewBox="0 0 24 24"><rect x="0" y="0" width="18" height="5.5" fill="#86c440"/><rect x="0" y="9.3" width="13" height="5.5" fill="#3a84b8"/><rect x="0" y="18.5" width="24" height="5.5" fill="#fd8c24"/></svg>
<svg class="a" style="left:1936.00px;top:728.00px" width="21.58" height="21.58" viewBox="0 0 23.2 23.2"><rect x="0" y="5.6" width="5.6" height="17.6" fill="#86c440"/><rect x="8.8" y="11.6" width="5.6" height="11.6" fill="#3383b8"/><rect x="17.6" y="0" width="5.6" height="23.2" fill="#fd8c24"/></svg>
<div class="a" style="left:636.00px;top:1177.75px;width:1320.50px;height:1.50px;background:#cbcbcb;"></div>
<div class="t" style="right:1365.00px;text-align:right;top:1170.51px;font-size:19.6px;line-height:19.6px;font-weight:400;color:#444;">0</div>
<div class="a" style="left:636.00px;top:1089.92px;width:1320.50px;height:1.50px;background:#cbcbcb;"></div>
<div class="t" style="right:1365.00px;text-align:right;top:1082.68px;font-size:19.6px;line-height:19.6px;font-weight:400;color:#444;">1</div>
<div class="a" style="left:636.00px;top:1002.10px;width:1320.50px;height:1.50px;background:#cbcbcb;"></div>
<div class="t" style="right:1365.00px;text-align:right;top:994.86px;font-size:19.6px;line-height:19.6px;font-weight:400;color:#444;">2</div>
<div class="a" style="left:636.00px;top:914.28px;width:1320.50px;height:1.50px;background:#cbcbcb;"></div>
<div class="t" style="right:1365.00px;text-align:right;top:907.03px;font-size:19.6px;line-height:19.6px;font-weight:400;color:#444;">3</div>
<div class="a" style="left:636.00px;top:826.45px;width:1320.50px;height:1.50px;background:#cbcbcb;"></div>
<div class="t" style="right:1365.00px;text-align:right;top:819.21px;font-size:19.6px;line-height:19.6px;font-weight:400;color:#444;">4</div>
<div class="a" style="left:638.50px;top:821.30px;width:1.50px;height:357.95px;background:#c6c6c6;"></div>
<div class="a" style="left:639.00px;top:1177.60px;width:1317.50px;height:1.80px;background:#a8a8a8;"></div>
<div class="a" style="left:770.75px;top:917.60px;width:394.65px;height:260.70px;background:#005083;"></div>
<div class="a" style="left:1429.50px;top:864.80px;width:394.70px;height:313.50px;background:#5aa6d8;"></div>
<div class="t" style="left:-31.80px;width:2000px;text-align:center;top:896.12px;font-size:19.7px;line-height:19.7px;font-weight:400;color:#1c1c1c;letter-spacing:0.6px">2,96</div>
<div class="t" style="left:627.60px;width:2000px;text-align:center;top:843.42px;font-size:19.7px;line-height:19.7px;font-weight:400;color:#1c1c1c;letter-spacing:1.6px">3,57</div>
<div class="t" style="left:-30.20px;width:2000px;text-align:center;top:1184.32px;font-size:19.7px;line-height:19.7px;font-weight:400;color:#444;">false</div>
<div class="t" style="left:628.60px;width:2000px;text-align:center;top:1184.82px;font-size:19.7px;line-height:19.7px;font-weight:400;color:#444;">true</div>
<div class="t" style="left:290.00px;width:2000px;text-align:center;top:1216.96px;font-size:19.66px;line-height:19.66px;font-weight:400;color:#444;">Do you have any children?</div>
<div class="t" style="left:289.50px;width:2000px;text-align:center;top:770.32px;font-size:27.5px;line-height:27.5px;font-weight:700;color:#404040;">Satisfaction with flexiblity ~ Do you have any children?</div>
</body></html>
